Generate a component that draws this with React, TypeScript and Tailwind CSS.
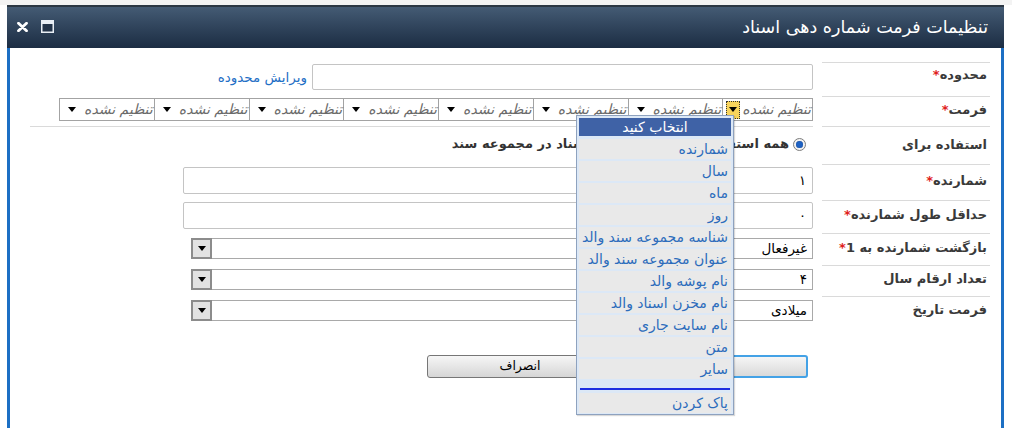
import React from "react";

function Arrow({ className = "" }: { className?: string }) {
  return (
    <svg width="8" height="5" viewBox="0 0 8 5" className={className}>
      <path d="M0 0 H8 L4 5 Z" fill="#000" />
    </svg>
  );
}

function SelectBox({ value }: { value: string }) {
  return (
    <div className="flex h-[21px] w-[622px] items-center border border-[#a9a9a9] bg-white">
      <span className="flex-1 pr-[5px] text-[13.5px] leading-[15px] text-black">{value}</span>
      <div className="-my-px -ml-px flex h-[21px] w-[21px] items-center justify-center border-2 border-[#8c8c8c] bg-[#e2e2e2]">
        <Arrow />
      </div>
    </div>
  );
}

function Label({ text, req, pt }: { text: string; req?: boolean; pt: string }) {
  return (
    <span className={`block pr-[3px] text-[13px] font-bold leading-[16px] text-[#3a3a3a] ${pt}`}>
      {text}
      {req ? <span className="text-[#e0201a]">*</span> : null}
    </span>
  );
}

const menuItems = [
  "شمارنده",
  "سال",
  "ماه",
  "روز",
  "شناسه مجموعه سند والد",
  "عنوان مجموعه سند والد",
  "نام پوشه والد",
  "نام مخزن اسناد والد",
  "نام سایت جاری",
  "متن",
  "سایر",
];

export default function App() {
  return (
    <div className="relative h-[428px] w-[1012px] overflow-hidden bg-white font-['DejaVu_Sans',sans-serif]">
      <div className="h-[5px] bg-[#f3f3f3]" />
      <div className="ml-[7px] flex h-[423px] w-[997px] flex-col">
        {/* title bar */}
        <div
          dir="ltr"
          className="flex h-[43px] shrink-0 items-center justify-between border-t-2 border-[#2b3743] bg-linear-to-b from-[#445b74] to-[#1c2d43] pl-[10px] pr-[16px]"
        >
          <div className="flex items-center gap-[13px] pb-[2px]">
            <svg width="11" height="10" viewBox="0 0 11 10">
              <path d="M1.5 1.2 L9.5 8.8 M9.5 1.2 L1.5 8.8" stroke="#fff" strokeWidth="2.8" strokeLinecap="round" />
            </svg>
            <svg width="13" height="13" viewBox="0 0 13 13">
              <rect x="0.75" y="0.75" width="11.5" height="11.5" fill="#223349" stroke="#e8eef5" strokeWidth="1.5" />
              <rect x="1" y="1" width="11" height="3" fill="#e8eef5" />
            </svg>
          </div>
          <span className="pb-[1px] text-[17.5px] leading-[20px] text-white">تنظیمات فرمت شماره دهی اسناد</span>
        </div>

        {/* body */}
        <div dir="rtl" className="flex-1 border-x-[3px] border-[#1c6fc4] bg-white pl-[20px] pr-[11px] pt-[14px]">
          {/* row 1 */}
          <div className="flex h-[35px] gap-[9px]">
            <div className="w-[168px] border-y border-[#dadada]">
              <Label text="محدوده" req pt="pt-[4px]" />
            </div>
            <div className="flex flex-1 items-start gap-[5px]">
              <div className="mt-[2px] h-[26px] w-[501px] rounded-[2px] border border-[#c4c4c4] bg-white" />
              <span className="mt-[7px] text-[13.5px] leading-[16px] text-[#1f6fc5]">ویرایش محدوده</span>
            </div>
          </div>

          {/* row 2 */}
          <div className="flex h-[30px] gap-[9px]">
            <div className="w-[168px] border-b border-[#dadada]">
              <Label text="فرمت" req pt="pt-[5px]" />
            </div>
            <div className="flex-1 border-b border-[#dadada]">
              <div className="mt-[1px] flex h-[23px] w-[754px] border border-[#a3a3a3] bg-white">
                {Array.from({ length: 8 }).map((_, i) => (
                  <div
                    key={i}
                    className={`flex flex-1 items-center justify-between pr-[1px] ${i < 7 ? "border-l border-[#a3a3a3]" : ""} ${i === 0 ? "pl-[3px]" : "pl-[8px]"}`}
                  >
                    <span className="text-[14px] italic leading-[15px] text-[#6a6a6a]">تنظیم نشده</span>
                    {i === 0 ? (
                      <span className="flex h-[18px] w-[14px] items-center justify-center border border-dotted border-[#333] bg-[#f8d45c]">
                        <Arrow />
                      </span>
                    ) : (
                      <Arrow />
                    )}
                  </div>
                ))}
              </div>
            </div>
          </div>

          {/* row 3 */}
          <div className="flex h-[38px] gap-[9px]">
            <div className="w-[168px] border-b border-[#dadada]">
              <Label text="استفاده برای" pt="pt-[10px]" />
            </div>
            <div className="flex flex-1 items-start">
              <div className="mt-[9px] flex items-center gap-[4px] pr-[7px]">
                <span className="flex h-[13px] w-[13px] items-center justify-center rounded-full border border-[#7d7d7d] bg-[#f2f2f2]">
                  <span className="h-[7px] w-[7px] rounded-full bg-[#1e62c4] shadow-[inset_0_0_1px_#0b2f6a]" />
                </span>
                <span className="text-[13px] font-bold leading-[16px] text-[#333]">همه استفاده‌های انواع محتوای اسناد در مجموعه سند</span>
              </div>
            </div>
          </div>

          {/* row 4 */}
          <div className="flex h-[36px] gap-[9px]">
            <div className="w-[168px] border-b border-[#dadada]">
              <Label text="شمارنده" req pt="pt-[8px]" />
            </div>
            <div className="flex-1">
              <div className="mt-[2px] flex h-[27px] w-[630px] items-center rounded-[2px] border border-[#c4c4c4] bg-white pr-[6px] text-[13px] text-black">
                ۱
              </div>
            </div>
          </div>

          {/* row 5 */}
          <div className="flex h-[33px] gap-[9px]">
            <div className="w-[168px] border-b border-[#dadada]">
              <Label text="حداقل طول شمارنده" req pt="pt-[6px]" />
            </div>
            <div className="flex-1">
              <div className="mt-[1px] flex h-[27px] w-[630px] items-center rounded-[2px] border border-[#c4c4c4] bg-white pr-[6px] text-[13px] text-black">
                ۰
              </div>
            </div>
          </div>

          {/* row 6 */}
          <div className="flex h-[32px] gap-[9px]">
            <div className="w-[168px] border-b border-[#dadada]">
              <Label text="بازگشت شمارنده به 1" req pt="pt-[6px]" />
            </div>
            <div className="flex-1 pt-[4px]">
              <SelectBox value="غیرفعال" />
            </div>
          </div>

          {/* row 7 */}
          <div className="flex h-[31px] gap-[9px]">
            <div className="w-[168px] border-b border-[#dadada]">
              <Label text="تعداد ارقام سال" pt="pt-[5px]" />
            </div>
            <div className="flex-1 pt-[3px]">
              <SelectBox value="۴" />
            </div>
          </div>

          {/* row 8 */}
          <div className="flex h-[33px] gap-[9px]">
            <div className="w-[168px]">
              <Label text="فرمت تاریخ" pt="pt-[5px]" />
            </div>
            <div className="flex-1 pt-[3px]">
              <SelectBox value="میلادی" />
            </div>
          </div>

          {/* buttons */}
          <div className="mr-[182px] mt-[25px] flex gap-[7px]">
            <button className="h-[23px] w-[188px] rounded-[3px] border-2 border-[#44a2e6] bg-linear-to-b from-[#f6f6f6] to-[#d9d9d9] text-[12.5px] text-black">
              تایید
            </button>
            <button className="h-[23px] w-[186px] rounded-[3px] border border-[#767676] bg-linear-to-b from-[#f6f6f6] to-[#d6d6d6] text-[12.5px] text-black">
              انصراف
            </button>
          </div>
        </div>
      </div>

      {/* dropdown menu overlay */}
      <div dir="rtl" className="absolute left-[576px] top-[115px] flex h-[300px] w-[158px] flex-col border border-[#8ea2bf] bg-[#dce8f6] px-[2px] pt-[2px] shadow-[1px_1px_1px_rgba(0,0,0,0.15)]">
        <div className="flex h-[18px] items-center justify-center bg-[#3f62a6] text-[14px] leading-[15px] text-white">انتخاب کنید</div>
        <div className="mt-[3px] flex flex-col gap-[2px]">
          {menuItems.map((m) => (
            <div key={m} className="flex h-[20px] items-center whitespace-nowrap bg-[#e9e9e9] pr-[3px] text-[14px] leading-[15px] text-[#2c6cbc]">
              {m}
            </div>
          ))}
        </div>
        <div className="mx-[1px] mt-[9px] h-[2px] bg-[#1e2fe0]" />
        <div className="mt-[3px] flex h-[20px] items-center bg-[#e9e9e9] pr-[3px] text-[14px] leading-[15px] text-[#2c6cbc]">پاک کردن</div>
      </div>
    </div>
  );
}
